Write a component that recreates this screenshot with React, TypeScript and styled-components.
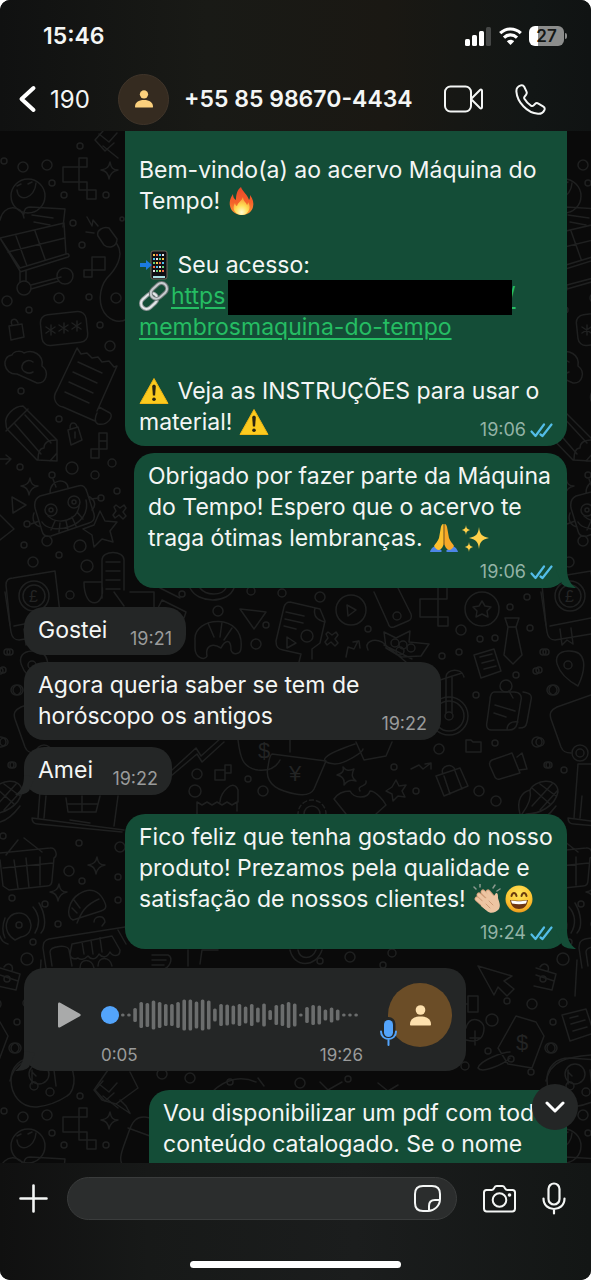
import React from "react";
import styled, { createGlobalStyle, css } from "styled-components";

const GlobalStyle = createGlobalStyle`
  *, *::before, *::after { box-sizing: border-box; }
  body {
    margin: 0;
    background: #ffffff;
    color: #f4f6f5;
    font-family: Inter, "Liberation Sans", sans-serif;
  }
  button, input { font: inherit; color: inherit; }
`;

/* ---------- layout ---------- */

const Screen = styled.div`
  display: flex;
  flex-direction: column;
  height: 100vh;
  overflow: hidden;
  border-radius: 10px;
  background: #0a0a0a;
`;

const Header = styled.header`
  flex: none;
  padding: 20px 24px 6px 18px;
  background: linear-gradient(90deg, #101111 0%, #191a16 35%, #1a1813 65%, #121615 90%, #101313 100%);
`;

const StatusBar = styled.div`
  display: flex;
  align-items: center;
  justify-content: space-between;
  height: 32px;
  padding-left: 25px;
`;

const Clock = styled.time`
  font-size: 23px;
  font-weight: 600;
`;

const StatusIcons = styled.div`
  display: flex;
  align-items: center;
  gap: 7px;
`;

const Battery = styled.div`
  display: flex;
  align-items: center;
  justify-content: center;
  position: relative;
  width: 35px;
  height: 20px;
  margin-right: 3px;
  border-radius: 6px;
  background: linear-gradient(90deg, #ffffff 27%, #8c8d8c 27%);
  color: #161816;
  font-size: 17px;
  font-weight: 600;

  &::after {
    content: "";
    position: absolute;
    left: 36px;
    top: 7px;
    width: 2px;
    height: 6px;
    border-radius: 0 2px 2px 0;
    background: #8c8d8c;
  }
`;

const NavBar = styled.nav`
  display: flex;
  align-items: center;
  height: 52px;
  margin-top: 21px;
`;

const plainButton = css`
  display: flex;
  align-items: center;
  padding: 0;
  border: 0;
  background: none;
  cursor: pointer;
`;

const BackButton = styled.button`
  ${plainButton}
  gap: 13px;
  width: 100px;
  font-size: 24px;
`;

const IconButton = styled.button`
  ${plainButton}
  flex: none;
  justify-content: center;
`;

const HeaderAvatar = styled.div`
  display: grid;
  place-items: center;
  flex: none;
  width: 51px;
  height: 51px;
  border: 1px solid #40352a;
  border-radius: 50%;
  background: #352b20;
`;

const ContactName = styled.h1`
  flex: 1;
  margin: 0 0 0 15px;
  font-size: 23px;
  font-weight: 600;
  white-space: nowrap;
`;

const HeaderActions = styled.div`
  display: flex;
  align-items: center;
  gap: 32px;
  margin-right: 21px;
`;

const Chat = styled.main`
  position: relative;
  flex: 1;
  min-height: 0;
  overflow: hidden;
`;

const WallpaperSvg = styled.svg`
  position: absolute;
  inset: 0;
  width: 100%;
  height: 100%;
  font-family: "Liberation Sans", sans-serif;

  text {
    fill: #232424;
    stroke: none;
  }
`;

const Messages = styled.div`
  position: relative;
  display: flex;
  flex-direction: column;
  padding: 0 24px;
`;

const Bubble = styled.article<{ $from: "me" | "them"; $min?: number; $gap?: number; $cut?: boolean }>`
  position: relative;
  align-self: ${(p) => (p.$from === "me" ? "flex-end" : "flex-start")};
  min-width: ${(p) => p.$min ?? 0}px;
  max-width: 442px;
  margin-top: ${(p) => p.$gap ?? 7}px;
  padding: ${(p) => (p.$cut ? "24px" : "8px")} 14px 6px;
  border-radius: ${(p) => (p.$cut ? "0 0 20px 20px" : "20px")};
  background: ${(p) => (p.$from === "me" ? "#144d37" : "#242626")};
`;

const Text = styled.p`
  margin: 0;
  font-size: 23px;
  line-height: 31px;
  white-space: nowrap;

  & + & { margin-top: 33px; }
`;

const ShortRow = styled.div`
  display: flex;
  align-items: flex-end;
  justify-content: space-between;
  gap: 18px;

  ${Text} { padding-bottom: 3px; }
`;

const Meta = styled.footer<{ $from: "me" | "them"; $tucked?: boolean }>`
  display: flex;
  align-items: center;
  justify-content: flex-end;
  gap: 4px;
  height: 20px;
  margin-top: ${(p) => (p.$tucked ? -18 : 0)}px;
  color: ${(p) => (p.$from === "me" ? "#93b3a6" : "#9a9b9b")};
  font-size: 18px;
  line-height: 20px;
`;

const BelowText = styled.div`
  padding-top: 8px;
`;

const MessageLink = styled.a`
  color: #25bd63;
  text-decoration: underline;
  text-decoration-thickness: 2px;
  text-underline-offset: 3px;
`;

const Redaction = styled.span`
  display: inline-block;
  position: relative;
  width: 284px;
  height: 35px;
  margin: -4px -5px -4px 3px;
  vertical-align: middle;
  background: #000000;
`;

const EmojiSvg = styled.svg`
  width: 30px;
  height: 30px;
  margin: -4px 2px -4px 0;
  vertical-align: -3px;
`;

const TailSvg = styled.svg<{ $side: "left" | "right" }>`
  position: absolute;
  bottom: 0;
  ${(p) => (p.$side === "left" ? "left: -9px;" : "right: -9px;")}
`;

/* ---------- voice note ---------- */

const VoiceBubble = styled(Bubble)`
  display: grid;
  grid-template-columns: 43px 262px 1fr;
  align-items: center;
  width: 442px;
  height: 103px;
  padding: 15px 14px 6px 34px;
`;

const PlayButton = styled(IconButton)`
  justify-content: flex-start;
  height: 64px;
`;

const Track = styled.div`
  position: relative;
  display: flex;
  align-items: center;
  height: 64px;
`;

const Seek = styled.input`
  position: absolute;
  inset: 22px 0;
  width: 100%;
  height: 20px;
  margin: 0;
  appearance: none;
  background: transparent;

  &::-webkit-slider-thumb {
    appearance: none;
    width: 18px;
    height: 18px;
    border-radius: 50%;
    background: #53a4fb;
  }
`;

const VoiceTimes = styled.div`
  grid-column: 2;
  display: flex;
  justify-content: space-between;
  height: 18px;
  color: #9a9b9b;
  font-size: 17px;
  line-height: 16px;
`;

const VoiceAvatar = styled.div`
  position: relative;
  justify-self: end;
  display: grid;
  place-items: center;
  width: 64px;
  height: 64px;
  border-radius: 50%;
  background: #6b4d27;
`;

const MicBadge = styled.svg`
  position: absolute;
  left: -9px;
  bottom: 0;
`;

/* ---------- bottom ---------- */

const ScrollDown = styled.button`
  ${plainButton}
  position: absolute;
  right: 13px;
  bottom: 33px;
  justify-content: center;
  width: 46px;
  height: 46px;
  border-radius: 50%;
  background: #242626;
`;

const Composer = styled.footer`
  flex: none;
  padding: 14px 0 12px;
  background: linear-gradient(90deg, #101010 0%, #171918 25%, #1b1d1d 60%, #131615 100%);
`;

const ComposerRow = styled.form`
  display: flex;
  align-items: center;
  padding: 0 25px 0 19px;
`;

const Field = styled.div`
  display: flex;
  align-items: center;
  flex: 1;
  min-width: 0;
  height: 43px;
  margin: 0 26px 0 19px;
  padding: 0 15px 0 20px;
  border: 1px solid #3a3c3c;
  border-radius: 22px;
  background: #2b2d2d;
`;

const FieldInput = styled.input`
  flex: 1;
  min-width: 0;
  border: 0;
  outline: 0;
  background: transparent;
  font-size: 23px;
`;

const ComposerActions = styled.div`
  display: flex;
  align-items: center;
  gap: 26px;
`;

const HomeIndicator = styled.div`
  width: 211px;
  height: 7px;
  margin: 41px auto 0;
  border-radius: 4px;
  background: #ffffff;
`;

/* ---------- emoji ---------- */

const Emoji = ({ label, children }: { label: string; children: React.ReactNode }) => (
  <EmojiSvg viewBox="0 0 30 30" role="img" aria-label={label}>{children}</EmojiSvg>
);

const Fire = () => (
  <Emoji label="fogo">
    <defs>
      <linearGradient id="fire" x1="0" y1="0" x2="0" y2="1">
        <stop offset="0" stopColor="#e8472a" />
        <stop offset="0.55" stopColor="#f4622a" />
        <stop offset="1" stopColor="#fb9a35" />
      </linearGradient>
      <radialGradient id="fireCore" cx="0.5" cy="0.85" r="0.7">
        <stop offset="0" stopColor="#fffbd0" />
        <stop offset="0.55" stopColor="#ffdf57" />
        <stop offset="1" stopColor="#fba63b" />
      </radialGradient>
    </defs>
    <path fill="url(#fire)" d="M14 1c1 4 7 8 8 13 1-1 1-3 1-5 3 4 4 8 3 12-1 5-6 8-11 8S4 26 3 20c-1-5 1-9 3-12 0 3 1 5 3 6 0-5 1-10 5-13z" />
    <path fill="url(#fireCore)" d="M16 11c0 4 3 5 4 8 1-1 1-2 1-3 2 3 2 6 1 8-1 3-4 5-7 5s-7-2-8-5c-1-3 0-5 1-7 0 1 1 3 2 3 1-4 5-5 6-9z" />
  </Emoji>
);

const PhoneIn = () => (
  <Emoji label="celular com seta">
    <rect x="12" y="1" width="16" height="28" rx="2" fill="#101014" stroke="#6f6459" />
    {[5, 9, 13, 17, 21].map((y, r) =>
      [15, 18, 21, 24].map((x, c) => (
        <rect key={`${x}-${y}`} x={x - 1} y={y - 1} width="2" height="2" fill={["#f5c84b", "#ef6a4b", "#4fc1ee", "#e9e9e9", "#64d07a"][(r * 2 + c) % 5]} />
      ))
    )}
    <path d="M14 27h12" stroke="#a9dfe2" strokeWidth="2" />
    <path fill="#1b7be0" d="M1 13h6v-3l6 5-6 5v-3H1z" />
  </Emoji>
);

const ChainLink = () => (
  <Emoji label="link">
    <g fill="none" transform="rotate(-42 15 15)">
      <rect x="-1" y="10" width="18" height="11" rx="5.5" stroke="#8f9698" strokeWidth="4" />
      <rect x="-1" y="10" width="18" height="11" rx="5.5" stroke="#e4e8ea" strokeWidth="2" />
      <rect x="13" y="9" width="18" height="11" rx="5.5" stroke="#6d7375" strokeWidth="4" />
      <rect x="13" y="9" width="18" height="11" rx="5.5" stroke="#c6cccf" strokeWidth="2" />
    </g>
  </Emoji>
);

const Warning = () => (
  <Emoji label="aviso">
    <path fill="#fccb1e" stroke="#f0b414" strokeLinejoin="round" d="M15 2.5 29 27.5H1z" />
    <path fill="#2b2410" d="M13.2 10.5c0-2.4 3.6-2.4 3.6 0l-.7 9h-2.2z" />
    <circle cx="15" cy="23.2" r="1.8" fill="#2b2410" />
  </Emoji>
);

const Pray = () => (
  <Emoji label="mãos juntas">
    <path fill="#4d86e8" d="M1 29c1-4 4-6 7-6l5 5-1 1zM29 29c-1-4-4-6-7-6l-5 5 1 1z" />
    <path fill="#fcc02e" d="M14.6 1c-2 0-2.600 2-3 5L10 15c-1 3-4 6-5 8 1 2 3 4 5 4 3-1 4.600-4 4.600-7z" />
    <path fill="#f7a827" d="M15.400 1c2 0 2.600 2 3 5L20 15c1 3 4 6 5 8-1 2-3 4-5 4-3-1-4.600-4-4.600-7z" />
    <path d="M15 2v20" stroke="#c9781a" strokeWidth="1" />
  </Emoji>
);

const Sparkles = () => (
  <Emoji label="brilhos">
    <g fill="#ffd04a">
      <path d="M18 4c1 7 2 9 10 11-8 2-9 4-10 11-1-7-2-9-10-11 8-2 9-4 10-11z" />
      <path d="M5 2c.4 3 1 4 4 5-3 1-3.600 2-4 5-.4-3-1-4-4-5 3-1 3.600-2 4-5zM8 19c.4 3 1 4 4 5-3 1-3.600 2-4 5-.4-3-1-4-4-5 3-1 3.600-2 4-5z" />
    </g>
  </Emoji>
);

const Clap = () => (
  <Emoji label="palmas">
    <path d="M4 5 2 3M8 3V0M21 4l2-3M25 7l3-2" stroke="#8c9a90" strokeWidth="1.500" strokeLinecap="round" />
    <g stroke="#cf9d78" strokeWidth="5" strokeLinecap="round">
      <path d="M5 15l9 8M7 11l10 9M11 8l9 9M16 8l6 7" />
    </g>
    <g stroke="#edc5a2" strokeWidth="3.400" strokeLinecap="round">
      <path d="M5 15l9 8M7 11l10 9M11 8l9 9M16 8l6 7" />
    </g>
    <path fill="#edc5a2" d="M11 15l11-3 2-3c2 0 2 2 2 5 1 4 3 7 1 11-3 4-9 5-12 2l-6-5z" />
    <path d="M14 20l4 4M17 17l4 4" stroke="#cf9d78" strokeLinecap="round" />
  </Emoji>
);

const Grin = () => (
  <Emoji label="sorriso">
    <defs>
      <radialGradient id="grin" cx="0.5" cy="0.3" r="0.7">
        <stop offset="0" stopColor="#ffe65c" />
        <stop offset="0.7" stopColor="#fcc330" />
        <stop offset="1" stopColor="#ec9a1d" />
      </radialGradient>
    </defs>
    <circle cx="15" cy="15" r="13.500" fill="url(#grin)" />
    <path d="M7.500 12c1-4 4-4 5 0M17.500 12c1-4 4-4 5 0" stroke="#6b3d10" strokeWidth="2" fill="none" strokeLinecap="round" />
    <path d="M6 16c6 1 12 1 18 0-1 6-4 9-9 9s-8-3-9-9z" fill="#6e3512" />
    <path d="M7 16.600c6 1 10 1 16 0l-1 3c-5 1-9 1-14 0z" fill="#ffffff" />
  </Emoji>
);

/* ---------- small drawings ---------- */

const Ticks = () => (
  <svg width="23" height="15" viewBox="0 0 23 15" fill="none" stroke="#53bde8" strokeWidth="2.200" strokeLinecap="round" strokeLinejoin="round" role="img" aria-label="lida">
    <path d="M1.500 8.500 5.500 13 14 1.500M10.500 11.500l2 1.500L21.500 1.500" />
  </svg>
);

const Tail = ({ side }: { side: "left" | "right" }) => (
  <TailSvg $side={side} width="24" height="20" viewBox="0 0 24 20" aria-hidden="true">
    <path
      transform={side === "left" ? "translate(24 0) scale(-1 1)" : undefined}
      fill={side === "left" ? "#242626" : "#144d37"}
      d="M4 2 15 0c0 9 2 15 9 20-6 0-11-1-14-4z"
    />
  </TailSvg>
);

const Person = ({ color, size }: { color: string; size: number }) => (
  <svg width={size} height={size} viewBox="0 0 20 20" fill={color} aria-hidden="true">
    <circle cx="10" cy="4.800" r="4.600" />
    <path d="M1 19.500c-.6 0-1-.4-1-1 0-5 4-7.500 10-7.500s10 2.500 10 7.500c0 .6-.4 1-1 1z" />
  </svg>
);

const Signal = () => (
  <svg width="27" height="19" viewBox="0 0 27 19" fill="#ffffff" aria-label="sinal" role="img">
    <rect x="0" y="12" width="5" height="7" rx="1.500" />
    <rect x="7" y="8" width="5" height="11" rx="1.500" />
    <rect x="14" y="4" width="5" height="15" rx="1.500" />
    <rect x="21" y="0" width="5" height="19" rx="1.500" fill="#454746" />
  </svg>
);

const Wifi = () => (
  <svg width="23" height="18" viewBox="0 0 23 18" fill="none" stroke="#ffffff" strokeWidth="3.200" aria-label="wi-fi" role="img">
    <path d="M1.200 6.200c6-5.600 14.600-5.600 20.600 0M5 10.600c3.800-3.600 9.200-3.600 13 0" />
    <path d="M11.500 18 7.800 14.200c2.200-2 5.200-2 7.400 0z" fill="#ffffff" stroke="none" />
  </svg>
);

const BAR_HEIGHTS = [
  3, 3, 14, 26, 24, 29, 26, 22, 22, 26, 31, 31, 27, 31, 29, 13, 22, 21, 19, 22, 17, 22, 15, 23, 10, 20, 22, 26, 23, 3, 16,
  20, 19, 11, 15, 11, 3, 3, 3,
];

const Waveform = () => (
  <svg width="262" height="36" viewBox="0 0 262 36" aria-hidden="true">
    {BAR_HEIGHTS.map((h, i) => (
      <rect key={i} x={20 + i * 6.14} y={18 - h / 2} width="3.600" height={h} rx="1.600" fill="#6b6d6d" />
    ))}
  </svg>
);

/* ---------- wallpaper ---------- */

const DOTS: [number, number, number][] = [
  [80, 146, 3], [4, 161, 3], [23, 167, 5], [47, 165, 5], [52, 183, 3], [64, 195, 3], [106, 195, 3], [73, 223, 3],
  [82, 245, 3], [122, 219, 2], [7, 301, 5], [59, 298, 5], [89, 297, 3], [29, 310, 3], [116, 298, 5], [100, 325, 3],
  [110, 346, 5], [21, 391, 3], [59, 419, 3], [72, 468, 6], [112, 463, 4], [95, 475, 4], [20, 467, 3], [117, 491, 3],
  [24, 545, 3], [59, 555, 3], [33, 562, 5], [87, 566, 6], [80, 546, 6], [70, 595, 4], [182, 594, 3], [282, 593, 4],
  [218, 611, 5], [256, 644, 5], [266, 625, 3], [320, 597, 5], [368, 629, 3], [251, 591, 4], [461, 630, 5], [480, 639, 3],
  [495, 638, 3], [459, 652, 3], [442, 656, 3], [510, 607, 3], [527, 597, 3], [530, 628, 3], [543, 652, 3], [516, 675, 3],
  [536, 671, 3], [552, 690, 5], [476, 695, 3], [439, 749, 5], [495, 743, 3], [537, 742, 5], [394, 767, 3], [547, 765, 3],
  [564, 770, 3], [416, 791, 3], [479, 791, 5], [496, 801, 5], [197, 774, 5], [248, 779, 3], [195, 791, 6], [263, 791, 5],
  [3, 836, 3], [79, 843, 3], [120, 847, 5], [69, 871, 5], [82, 881, 3], [118, 877, 3], [12, 898, 3], [45, 904, 3],
  [118, 900, 3], [58, 924, 3], [33, 942, 3], [27, 959, 6], [17, 1022, 3], [16, 1048, 5], [162, 1074, 5], [190, 1078, 5],
  [507, 1001, 3], [532, 1004, 5], [563, 1003, 4], [492, 1020, 6], [488, 1051, 3], [550, 1048, 5], [531, 1072, 3],
  [465, 1066, 4], [10, 652, 3], [3, 670, 3], [18, 690, 5], [4, 742, 4], [13, 765, 3], [350, 957, 5], [392, 953, 4],
  [320, 961, 3], [383, 965, 3], [230, 1082, 3], [300, 1083, 5], [348, 1079, 3],
];

const DoodleTile = () => (
  <g id="doodle-tile">
    {DOTS.map(([x, y, r]) => (
      <circle key={`${x}-${y}`} cx={x} cy={y} r={r} />
    ))}
    {/* smiley, bag and cart */}
    <circle cx="28" cy="196" r="17" />
    <path d="M17 190c1 13 18 9 19-7M17 186l4-2M28 184l4-2" />
    <path d="M0 220c3-16 22-16 24-2M24 214c0-4 2-7 6-7l35 2-2 18M32 215l21 3M34 222l16 3" />
    <path d="M0 238l64-15 2 31-46 14zM0 238l20 33M16 236l11 30M35 231l10 28M8 252l57-14M20 272l48-15c2-1 1-4-2-3M20 272v10M26 271v10M31 285l30-8M31 289l28-8" />
    <circle cx="24" cy="288" r="7" />
    <circle cx="65" cy="276" r="8" />
    {/* pixels and sparkles */}
    <path d="M63 167h16v15H63zM79 158h8v9h-8zM79 182h8v8h-8zM87 190h9v9h-9zM92 257h13v13H92zM84 270h8v7h-8zM99 433h8v8h-8zM99 441h8v8h-8zM91 449h8v9h-8z" />
    <path d="M110 162c1 6 3 8 8 8-5 1-8 3-9 9-1-6-3-8-8-9 6-1 8-3 9-8zM30 478c1 6 3 8 8 8-5 1-8 3-9 9-1-6-3-8-8-9 6-1 8-3 9-8zM97 857c1 6 3 8 8 8-5 1-8 3-9 9-1-6-3-8-8-9 6-1 8-3 9-8zM59 884c1 6 3 8 8 8-5 1-8 3-9 9-1-6-3-8-8-9 6-1 8-3 9-8z" />
    {/* plug */}
    <path d="M98 236c-2-6 6-10 11-8l8 11c0 8-8 10-13 6zM87 217l5 9 1-6 5 6M86 232l8 1M117 244c8 12-2 26-10 34-8 10-10 28 0 38 8 7 15 6 20 3" />
    {/* hammer */}
    <path d="M95 140l8-9M95 140l10 11 9-8M103 146l15 12M99 134l10 8 8-9" />
    {/* password field and padlock */}
    <rect x="41" y="313" width="46" height="31" rx="8" transform="rotate(-6 64 328)" />
    <path d="M51 325v10M46 327l9 6M55 327l-9 6M64 323v10M59 325l9 6M68 325l-9 6M77 321v10M72 323l9 6M81 323l-9 6" />
    <path d="M9 326l13-2 2 13-13 3zM12 325c-3-6 4-8 6-2" />
    {/* cloud */}
    <path d="M17 374c-14 1-16-18-5-19 2-5 10-4 12-2 8-4 20 1 18 13 8 6 4 18-5 17zM33 362c-4-3-10-1-11 4s6 9 11 6" />
    {/* receipt */}
    <path d="M77 348l-20 42c-6 9 0 16 6 17l32 14M77 348l4 6 6-1 5 5 6-1 4 5 7-1 5 6 3-1-20 45M99 407l11 6c4 3-2 13-12 11-4-2-3-7-1-11M78 362l24 11M73 372l24 11M69 382l24 11M65 392l24 11" />
    {/* pencil */}
    <path d="M6 424c-2-8 8-18 17-18l34 34v21l-20-1-30-31c-1-2-1-3-1-5zM6 431l22-22M15 424l26 30M25 415l26 28M38 460c0-8 2-12 6-12 0-6 4-8 12-8M50 461l7-8" />
    {/* pin */}
    <path d="M68 430l10-3 4 13-11 5zM70 428c0-7 6-6 7-1M75 432v6M0 459h11l-5-4M11 459l-5 5M12 497l14 8-13 8z" />
    {/* robot */}
    <path d="M40 496l38-10c5-2 8 2 9 6l7 22c1 5-1 8-5 9l-38 13c-5 1-8-1-9-5l-7-23c-1-6 1-10 5-12zM50 493c0-15 18-15 18-5M53 479l3 8M91 499l8-1M31 524l8-3M34 513c-3 8 2 13 7 14M88 496c8 4 8 10 4 14M42 522c8 14 50 6 44-22M48 516c10 10 30 4 31-10M51 530l4-9M59 532l1-9M68 530l-2-9M76 526l-4-9M83 519l-6-7" />
    <circle cx="51" cy="510" r="6" />
    <circle cx="51" cy="510" r="2" />
    <circle cx="74" cy="502" r="6" />
    <circle cx="74" cy="502" r="2" />
    <circle cx="52" cy="475" r="3" />
    <circle cx="101" cy="498" r="3" />
    <circle cx="27" cy="524" r="3" />
    <circle cx="47" cy="541" r="5" />
    {/* star and cross */}
    <path d="M100 511l5 10 12 1-7 9 3 11-11-3-8 8-2-12-9-6 11-4zM116 505l4 3 4-3 2 3-3 4 3 4-3 3-4-4-4 3-2-3 3-4-2-4zM0 515l14 14-14 11" />
    {/* pound card and scroll */}
    <path d="M6 585c0-5 3-7 7-7l42-7 5 42M6 585l4 40" />
    <circle cx="34" cy="596" r="15" />
    <circle cx="34" cy="596" r="11" />
    <text x="29" y="602" fontSize="16">£</text>
    <path d="M102 598v-38c0-10 22-10 22 0v30M84 582h18M84 582c0 30 22 24 18 4M106 562h14M106 571h14M106 580h14M106 589h14" />
    <path d="M190 588c8 16 38 16 44 0M200 588c6 8 22 8 26 0M162 600l24 12-2 6-26-10zM160 588l20 10M114 592l10 14M130 592h24v20" />
    {/* croissant, cursor, page */}
    <path d="M195 640c-2-24 50-28 46 8 0 6-8 8-10 2 0-12-6-10-10-2-8-5-16-3-14 8-2 5-12 2-12-8zM208 623l6 14M222 622l-2 15M232 628l-8 12M240 609l26 3-12 17z" />
    <path d="M290 602l30 7 5 12-5 22-8 6v10M290 602c-4 0-5 2-6 5l-8 34c0 6 2 8 7 9l18 4-2 8M315 608c-2 8 2 12 10 14M286 612l18 4M285 619l18 4M284 626l12 3M287 637l9 6-9 5z" />
    <circle cx="307" cy="636" r="6" />
    <path d="M328 632l4 3 4-3 2 3-3 4 3 4-3 3-4-4-4 3-2-3 3-4-2-4zM346 657l2-10 6 2 4-8M353 642l6-1 1 7" />
    {/* play disc, card, blocks */}
    <circle cx="351" cy="610" r="15" />
    <path d="M347 605l9 5-8 6zM374 592l14 31c1 4 3 5 6 4l14-6c3-1 4-4 3-7l-13-26" />
    <circle cx="397" cy="616" r="4" />
    <path d="M420 599h18v18h-18zM438 588v29h10v9h-10zM438 599h9v-11" />
    {/* star medal, tie */}
    <circle cx="482" cy="609" r="17" />
    <path d="M482 601l3 5 6 1-4 4 1 6-6-3-6 3 1-6-4-4 6-1zM505 618h14l-3 9 6 28-9 9-9-9 4-28zM508 627h8" />
    {/* berries */}
    <path d="M368 650c-4-8 5-12 14-8l24 20M386 648l-2-16 12 6 14-7-1 11 20 2-8 12-20 1zM384 645l28 14" />
    <circle cx="395" cy="643" r="4" />
    <circle cx="403" cy="645" r="4" />
    <circle cx="411" cy="648" r="4" />
    <circle cx="400" cy="651" r="4" />
    {/* note, book, map pin */}
    <path d="M474 655l20-6 7 22-20 7zM480 657l12-3M482 663l12-3M484 669l12-3M541 592l6 40c1 6 4 8 8 8l36-6M550 626l41-8M560 629l2 16 5-5 6 4-2-16M578 686c-22-12-30-34-10-35s18 18 10 35z" />
    <circle cx="568" cy="665" r="4" />
    {/* unicycle */}
    <circle cx="449" cy="716" r="19" />
    <circle cx="449" cy="716" r="15" />
    <circle cx="449" cy="716" r="4" />
    <path d="M446 713v-36M452 713v-36M446 677c0-8 16-10 18 0M440 680l22-7" />
    {/* sticky note */}
    <path d="M494 692h20c6 0 8 4 7 8l-4 24c-1 4-3 6-8 6h-18c-4 0-5-4-4-8l3-22c0-5 2-8 4-8zM507 730c0-6 4-9 11-8M523 692c8 1 9 4 8 8l-4 22c-1 5-3 6-8 6M495 705l20 6M494 713l12 4" />
    <circle cx="506" cy="686" r="6" />
    <path d="M509 691l4 7" />
    {/* van, laptop */}
    <path d="M591 695l-34 12c-6 3-8 6-6 12l10 28c2 5 5 6 10 6M574 818l4-54h28" />
    <circle cx="580" cy="753" r="8" />
    <circle cx="580" cy="753" r="4" />
    {/* chart, dollar bag, yen tag */}
    <path d="M172 770l24-22 5 8 20-18M171 776l26-22 5 8 22-20M238 740c2 16 4 28 20 30 10 1 18-2 22-10M290 740v12M356 742l8 18 22-4 6-14M355 744c-30 10-40 18-20 20 10 0 28-12 28-15" />
    <text x="258" y="758" fontSize="22">$</text>
    <path d="M272 754l54 7-12 28c-4 8-18 6-30 2-16-5-18-16-16-24 1-6 1-11 4-13z" />
    <text x="289" y="781" fontSize="22">¥</text>
    <path d="M215 770h10v10h-10zM225 765h6v8h-6zM343 767c3 4 6 4 11 2-3 6-2 9 2 12-6-2-9 0-12 4 1-6-2-9-7-10 6-2 7-4 6-8zM396 780l3 6 7-1-4 6 3 6-7-1-5 5-1-7-6-3 6-4z" />
    {/* folder, zig arrow, video, suitcase */}
    <path d="M466 740h5l2 2h8v10h-15zM411 769l8-4 4 4 8-6M425 764l6-1v6M492 760l20-7 8 20-20 6c-3 1-5-1-6-4l-4-9c-1-3 0-5 2-6zM517 757l5-4 5 16-8 1M436 776l24-8 8 18-24 10zM443 774c-4-8 10-12 12-4M444 776l6 18M455 771l7 18" />
    {/* corn, gear, bottle */}
    <path d="M520 814c-4-14 2-22 10-24 2 8-2 16-8 24M530 790c4-10 28-14 28 2-3 14-18 22-32 22M532 788l18 16M540 784l16 12M532 806l20-22M540 810l18-20" />
    <path d="M0 822c8-2 14-8 20-16" />
    <circle cx="312" cy="814" r="14" strokeDasharray="4 3" />
    <circle cx="312" cy="814" r="8" />
    <path d="M197 814v-12l5 3 5-3 5 3 5-3 5 3 5-3 5 3 5-3v9M220 802c0-10 14-24 18-12v12M334 799c4-6 10-8 16-8 4 8 18 8 20 0 6 0 14 10 16 14l-10 9M334 799l12 15M360 791c-4-6 8-4 6-10" />
    {/* crate and shelf */}
    <path d="M46 796l-2 22M32 818l92 12M32 818c0 4 2 6 6 6l84 8M66 798l2 14h28l4-16M82 796v16M68 804h30M118 796l-4 30M70 820l20 3" />
    {/* basket */}
    <path d="M0 853l50-5c6-1 8 8 4 10l-2 22c0 4-2 6-5 6l-38 4-6-4-3-26M3 868l50-5M14 860l4 28M26 858l3 30M40 857v28M6 855l12-15M24 838l18 14" />
    {/* taco */}
    <path d="M73 920c-8-4-4-20 6-26 12-8 20-2 24 5 4 7 4 10-2 12zM77 923c4-10 8-18 22-24M94 922c0-6 10-8 11 0l-3 4M74 900l6 8M72 908l5 5" />
    {/* podcast */}
    <circle cx="19" cy="925" r="3" />
    <path d="M15 940c-14-8-10-27 4-27s17 22 2 24zM33 907c7 8 7 18 2 26M39 903c6 10 8 24 2 30M5 918c-3 8-3 14 0 20M0 936c1 4 4 7 8 8" />
    {/* shop */}
    <path d="M46 968l-3-20c0-6 2-8 6-9l76-12M52 966l-2-14c0-6 18-8 19-2l3 16M72 944l40-8 8 14c0 8-8 6-10 2-3 6-8 6-11 2-3 6-8 6-11 2-4 4-8 4-10 2-4 2-8 0-8-4zM82 942l2 12M91 940l2 14M100 938l2 14M80 968c0-10 12-10 14 0M98 966c0-10 12-10 14 0M118 930l8 14" />
    <path d="M152 955h16c6 2 2 14-6 14M152 960h14M152 965h12M188 950v16M200 964l2-14h16M290 950c4 18 26 18 32 0M298 950c2 10 14 10 18 0" />
    {/* briefcases */}
    <path d="M0 968l20 6-4 16-18-4M0 975l18 6M4 967c4-6 10-2 8 4" />
    <circle cx="7" cy="979" r="3" />
    {/* pointer, price tag, document */}
    <path d="M478 966l34 10-8 5 10 8-7 7-9-9-4 8zM516 1016l20 6 8 14-12 32-24-4-10-16zM510 1052c-6 0-30 8-32 16 4 6 26-4 32-10M458 1004h10v-8h10v16h-10v-8M466 1028c4-14 18-8 18 0s-4 16-18 12M470 1038h10M475 1031v14" />
    <circle cx="511" cy="1059" r="3" />
    <text x="516" y="1050" fontSize="22">$</text>
    <path d="M562 1015l24-6 8 24-24 8zM570 1018l8-2M571 1024l14-4M573 1031l14-4M546 1081c4-20 20-24 45-26M577 960l-2 36" />
    <circle cx="575" cy="1074" r="10" />
    {/* music bubble */}
    <path d="M11 1080c0-14 10-22 22-22l30 2c14 6 14 30 4 36-12 8-22 10-30 11-16 1-26-12-26-27zM32 1070v14M32 1072l4 4M54 1070l2 16" />
    <circle cx="34" cy="1086" r="4" />
    <circle cx="50" cy="1092" r="4" />
    {/* brush */}
    <path d="M108 1070l-14 20 8 10 14 4 22-16-8-16M116 1104l12 8c4 3 2 2-2-6l-6-6" />
    <path d="M150 1118c-14-4-18 4-22 16s-10 24-6 30l28 12M128 1128l22 8" />
    <path d="M320 1082l8 8 14-8M378 1083l10 8 10-6M212 1092c14-14 30-16 44-10M258 1078l6 8" />
  </g>
);

const Wallpaper = () => (
  <WallpaperSvg aria-hidden="true">
    <g transform="translate(0 -131)" fill="none" stroke="#1f2020" strokeWidth="1.500" strokeLinejoin="round" strokeLinecap="round">
      <DoodleTile />
      <use href="#doodle-tile" x="536" />
      <use href="#doodle-tile" x="-536" />
      <use href="#doodle-tile" y="950" />
      <use href="#doodle-tile" x="536" y="950" />
    </g>
  </WallpaperSvg>
);

/* ---------- page ---------- */

const Sent = ({ time, tucked }: { time: string; tucked?: boolean }) => (
  <Meta $from="me" $tucked={tucked}>
    <time>{time}</time>
    <Ticks />
  </Meta>
);

export default function App() {
  return (
    <>
      <GlobalStyle />
      <Screen>
        <Header>
          <StatusBar>
            <Clock>15:46</Clock>
            <StatusIcons>
              <Signal />
              <Wifi />
              <Battery>27</Battery>
            </StatusIcons>
          </StatusBar>
          <NavBar>
            <BackButton type="button" aria-label="Voltar, 190 conversas">
              <svg width="19" height="28" viewBox="0 0 19 28" fill="none" stroke="#ffffff" strokeWidth="4" strokeLinecap="round" strokeLinejoin="round">
                <path d="M15.500 3 3.500 14l12 11" />
              </svg>
              190
            </BackButton>
            <HeaderAvatar>
              <Person color="#fbd07d" size={18} />
            </HeaderAvatar>
            <ContactName>+55 85 98670-4434</ContactName>
            <HeaderActions>
              <IconButton type="button" aria-label="Chamada de vídeo">
                <svg width="39" height="28" viewBox="0 0 39 28" fill="none" stroke="#f4f6f5" strokeWidth="2" strokeLinejoin="round">
                  <rect x="1" y="1.500" width="26" height="25" rx="5.500" />
                  <path d="M27 14 36 5c.9-.8 2-.4 2 .8v16.400c0 1.200-1.100 1.600-2 .8z" />
                </svg>
              </IconButton>
              <IconButton type="button" aria-label="Ligar">
                <svg width="31" height="31" viewBox="0 0 31 31" fill="none" stroke="#f4f6f5" strokeWidth="2" strokeLinejoin="round">
                  <path d="M5.800 1.400c-3 1-4.600 3.400-4.400 6.200C2.200 18 12 29 23 29.800c2.800.2 5.200-1.200 6.400-3.800.6-1.400.2-2.600-1-3.400l-5-3c-1.200-.8-2.400-.6-3.400.4l-1.600 1.600c-.6.6-1.400.6-2.200.2-3-1.800-5.200-4.200-6.800-7-.4-.8-.4-1.400.2-2.200L11 10.800c1-1.200 1-2.200.4-3.400L9.200 2.800C8.400 1.400 7.200.9 5.800 1.400z" />
                </svg>
              </IconButton>
            </HeaderActions>
          </NavBar>
        </Header>

        <Chat>
          <Wallpaper />
          <Messages>
            <Bubble $from="me" $min={442} $gap={0} $cut>
              <Text>
                Bem-vindo(a) ao acervo Máquina do<br />Tempo! <Fire />
              </Text>
              <Text>
                <PhoneIn /> Seu acesso:<br />
                <ChainLink />
                <MessageLink href="#acervo">
                  https<Redaction />/<br />membrosmaquina-do-tempo
                </MessageLink>
              </Text>
              <Text>
                <Warning /> Veja as INSTRUÇÕES para usar o<br />material! <Warning />
              </Text>
              <Sent time="19:06" tucked />
            </Bubble>

            <Bubble $from="me" $min={433}>
              <Text>
                Obrigado por fazer parte da Máquina<br />do Tempo! Espero que o acervo te<br />traga ótimas lembranças. <Pray /><Sparkles />
              </Text>
              <BelowText>
                <Sent time="19:06" />
              </BelowText>
              <Tail side="right" />
            </Bubble>

            <Bubble $from="them" $min={162} $gap={19}>
              <ShortRow>
                <Text>Gostei</Text>
                <Meta $from="them"><time>19:21</time></Meta>
              </ShortRow>
            </Bubble>
            <Bubble $from="them" $min={417}>
              <Text>Agora queria saber se tem de<br />horóscopo os antigos</Text>
              <Meta $from="them" $tucked><time>19:22</time></Meta>
            </Bubble>
            <Bubble $from="them" $min={148}>
              <ShortRow>
                <Text>Amei</Text>
                <Meta $from="them"><time>19:22</time></Meta>
              </ShortRow>
              <Tail side="left" />
            </Bubble>

            <Bubble $from="me" $min={442} $gap={19}>
              <Text>
                Fico feliz que tenha gostado do nosso<br />produto! Prezamos pela qualidade e<br />satisfação de nossos clientes! <Clap /><Grin />
              </Text>
              <BelowText>
                <Sent time="19:24" />
              </BelowText>
              <Tail side="right" />
            </Bubble>

            <VoiceBubble $from="them" $gap={19}>
              <PlayButton type="button" aria-label="Reproduzir áudio">
                <svg width="23" height="26" viewBox="0 0 23 26" fill="#a9aaaa">
                  <path d="M0 2C0 .6 1 0 2.200.7l19.600 11c1.200.6 1.200 2 0 2.600l-19.600 11C1 26 0 25.400 0 24z" />
                </svg>
              </PlayButton>
              <Track>
                <Waveform />
                <Seek type="range" min={0} max={5} defaultValue={0} aria-label="Posição do áudio" />
              </Track>
              <VoiceAvatar>
                <Person color="#fde0ae" size={21} />
                <MicBadge width="19" height="30" viewBox="0 0 19 30" fill="none" aria-hidden="true">
                  <path d="M5 7a4.500 4.500 0 0 1 9 0v8a4.500 4.500 0 0 1-9 0z" fill="#53a4fb" stroke="#242626" strokeWidth="5" />
                  <rect x="5" y="3" width="9" height="17" rx="4.500" fill="#53a4fb" />
                  <path d="M2 14.500c0 10 15 10 15 0M9.500 22v6" stroke="#53a4fb" strokeWidth="2" strokeLinecap="round" />
                </MicBadge>
              </VoiceAvatar>
              <VoiceTimes>
                <span>0:05</span>
                <time>19:26</time>
              </VoiceTimes>
              <Tail side="left" />
            </VoiceBubble>

            <Bubble $from="me" $min={418} $gap={19}>
              <Text>Vou disponibilizar um pdf com todo<br />conteúdo catalogado. Se o nome<br />&nbsp;</Text>
            </Bubble>
          </Messages>
          <ScrollDown type="button" aria-label="Ir para o fim">
            <svg width="20" height="13" viewBox="0 0 20 13" fill="none" stroke="#ffffff" strokeWidth="3" strokeLinecap="round" strokeLinejoin="round">
              <path d="m2 2 8 8 8-8" />
            </svg>
          </ScrollDown>
        </Chat>

        <Composer>
          <ComposerRow onSubmit={(e) => e.preventDefault()}>
            <IconButton type="button" aria-label="Anexar">
              <svg width="29" height="29" viewBox="0 0 29 29" stroke="#f4f6f5" strokeWidth="2.600" strokeLinecap="round">
                <path d="M14.500 1.500v26M1.500 14.500h26" />
              </svg>
            </IconButton>
            <Field>
              <FieldInput type="text" aria-label="Mensagem" />
              <IconButton type="button" aria-label="Figurinhas">
                <svg width="27" height="27" viewBox="0 0 27 27" fill="none" stroke="#f4f6f5" strokeWidth="2" strokeLinejoin="round">
                  <path d="M9 1h9c5 0 8 3 8 8v5c0 7-6 12-12 12H9c-5 0-8-3-8-8V9c0-5 3-8 8-8z" />
                  <path d="M26 15h-5c-4 0-6 2-6 6v5" />
                </svg>
              </IconButton>
            </Field>
            <ComposerActions>
              <IconButton type="button" aria-label="Câmera">
                <svg width="33" height="28" viewBox="0 0 33 28" fill="none" stroke="#f4f6f5" strokeWidth="2" strokeLinejoin="round">
                  <path d="M3.500 5h5.200c1 0 1.600-.4 2-1.200l.8-1.400c.5-1 1.200-1.400 2.200-1.400h5.600c1 0 1.700.4 2.200 1.400l.8 1.400c.4.8 1 1.200 2 1.200h5.200C31 5 32 6 32 7.500v16c0 1.800-1 3-2.800 3H3.800C2 26.500 1 25.300 1 23.500v-16C1 6 2 5 3.500 5z" />
                  <circle cx="16.500" cy="15" r="6.800" />
                  <circle cx="26.500" cy="10" r="1.800" fill="#f4f6f5" stroke="none" />
                </svg>
              </IconButton>
              <IconButton type="button" aria-label="Gravar áudio">
                <svg width="24" height="33" viewBox="0 0 24 33" fill="none" stroke="#f4f6f5" strokeWidth="2.200" strokeLinecap="round">
                  <rect x="6.500" y="1.500" width="11" height="21" rx="5.500" />
                  <path d="M1.500 16.500c0 14 21 14 21 0M12 27.500v4" />
                </svg>
              </IconButton>
            </ComposerActions>
          </ComposerRow>
          <HomeIndicator />
        </Composer>
      </Screen>
    </>
  );
}
